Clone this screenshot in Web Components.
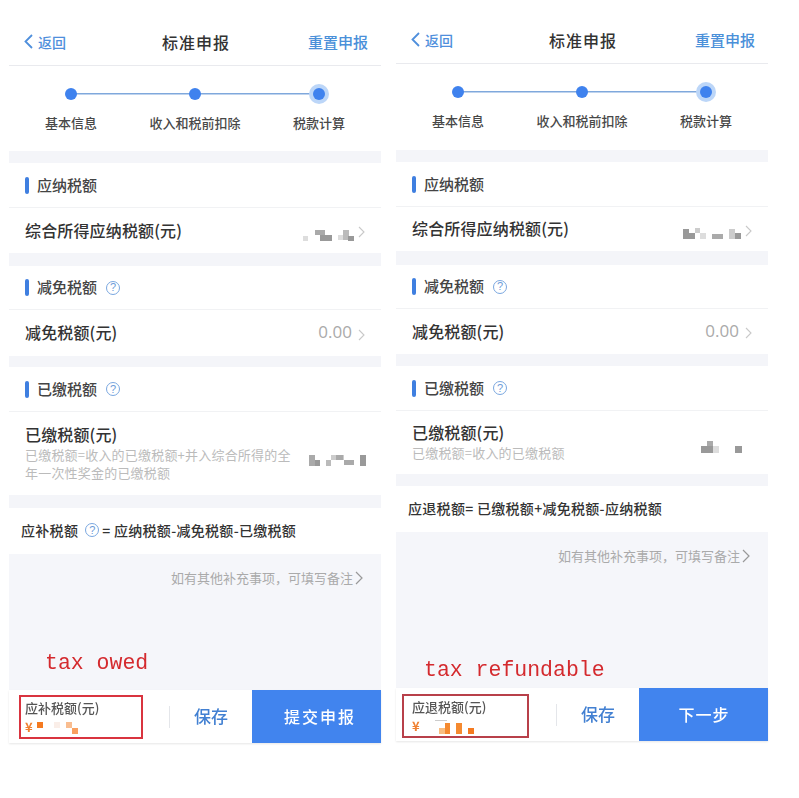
<!DOCTYPE html>
<html lang="zh-CN">
<head>
<meta charset="utf-8">
<title>标准申报</title>
<style>
  html, body { margin: 0; padding: 0; background: #fff; }
  body {
    width: 799px;
    height: 798px;
    overflow: hidden;
    display: flex;
    align-items: flex-start;
    padding-left: 9px;
    box-sizing: border-box;
    gap: 15px;
    font-family: "Noto Sans CJK SC", "Noto Sans", sans-serif;
    color: #333;
  }
  .green-strip { margin-left: 22px; width: 9px; height: 781px; background: #f4fcf2; }
  .note { font-family: "Liberation Mono", monospace; font-size: 21.5px; line-height: 24px; color: #d42a2e; white-space: pre; }
  .amount { color: #f08030; font-size: 13px; font-weight: 700; line-height: 14px; }
</style>
</head>
<body>

<tax-screen style="margin-top:20px">
  <app-nav></app-nav>
  <step-bar style="height:85px"></step-bar>
  <gray-band style="height:12px"></gray-band>
  <tax-section style="height:44px">应纳税额</tax-section>
  <tax-row style="height:46px" label="综合所得应纳税额(元)" chevron>
    <mosaic-blot size="51,11" rects="0,6,5,5,#ddd;12,0,10,5,#aaa;17,5,12,6,#999;35,5,5,5,#ddd;40,0,6,10,#bbb;45,6,6,5,#999" style="margin-top:9px"></mosaic-blot>
  </tax-row>
  <gray-band style="height:13px"></gray-band>
  <tax-section style="height:43px" help>减免税额</tax-section>
  <tax-row style="height:47px" label="减免税额(元)" chevron><span class="zero">0.00</span></tax-row>
  <gray-band style="height:11px"></gray-band>
  <tax-section style="height:44px" help>已缴税额</tax-section>
  <tax-row style="height:84px" label="已缴税额(元)" desc="已缴税额=收入的已缴税额+并入综合所得的全年一次性奖金的已缴税额">
    <mosaic-blot size="57,11" rects="0,0,6,11,#aaa;6,5,5,6,#999;17,5,5,6,#bbb;22,0,13,5,#ccc;27,0,7,5,#aaa;35,5,10,5,#aaa;51,0,6,11,#999" style="margin:13px -1px 0 0"></mosaic-blot>
  </tax-row>
  <gray-band style="height:13px"></gray-band>
  <tax-formula style="height:46px"><span>应补税额</span><help-mark style="margin:0 3px 0 7px"></help-mark><span>= 应纳税额-减免税额-已缴税额</span></tax-formula>
  <remark-area style="height:136px">
    <div class="note" style="margin:0 0 15px 36px">tax owed</div>
  </remark-area>
  <bottom-bar action="提交申报" pad="6" box="124" top="5" tone="#d9343f" spread="2" nudge="7">
    <span slot="label">应补税额(元)</span>
    <span class="amount">¥</span>
    <mosaic-blot size="41,12" rects="0,0,6,6,#f57a20;17,0,6,6,#faeee8;29,0,6,6,#f9bd90;35,6,6,6,#f9a060" style="margin:2px 0 0 4px"></mosaic-blot>
  </bottom-bar>
</tax-screen>

<tax-screen style="margin-top:18px">
  <app-nav></app-nav>
  <step-bar style="height:86px"></step-bar>
  <gray-band style="height:12px"></gray-band>
  <tax-section style="height:44px">应纳税额</tax-section>
  <tax-row style="height:45px" label="综合所得应纳税额(元)" chevron>
    <mosaic-blot size="58,11" rects="0,1,6,10,#999;6,5,6,6,#999;12,0,5,5,#ccc;17,5,6,6,#ddd;29,6,11,5,#aaa;46,1,6,10,#ccc;52,5,6,6,#999" style="margin-top:8px"></mosaic-blot>
  </tax-row>
  <gray-band style="height:14px"></gray-band>
  <tax-section style="height:43px" help>减免税额</tax-section>
  <tax-row style="height:46px" label="减免税额(元)" chevron><span class="zero">0.00</span></tax-row>
  <gray-band style="height:12px"></gray-band>
  <tax-section style="height:44px" help>已缴税额</tax-section>
  <tax-row style="height:64px" label="已缴税额(元)" desc="已缴税额=收入的已缴税额">
    <mosaic-blot size="41,12" rects="6,0,6,5,#aaa;0,5,12,7,#999;12,5,6,7,#ddd;34,5,7,7,#999" style="margin:8px 10px 0 0"></mosaic-blot>
  </tax-row>
  <gray-band style="height:12px"></gray-band>
  <tax-formula style="height:46px"><span>应退税额= 已缴税额+减免税额-应纳税额</span></tax-formula>
  <remark-area style="height:156px">
    <div class="note" style="margin:0 0 6px 28px">tax refundable</div>
  </remark-area>
  <bottom-bar action="下一步" pad="10" box="127" top="6" left="6" tone="#b8404a" spread="1" nudge="1">
    <span slot="label">应退税额(元)</span>
    <span class="amount">¥</span>
    <mosaic-blot size="39,14" rects="12,0,12,1,#ccc;16,8,6,6,#f9bd80;22,3,5,11,#f58a30;33,3,6,11,#f58a30;45,8,6,6,#f57a20" style="margin:1px 0 0 3px;width:60px"></mosaic-blot>
  </bottom-bar>
</tax-screen>

<div class="green-strip"></div>

<script>
class TaxScreen extends HTMLElement {
  constructor () {
    super()
    this.shadow = this.attachShadow({ mode: 'open' })
  }

  connectedCallback () {
    this.shadow.innerHTML = /*html*/`
      <style>
        :host {
          display: flex;
          flex-direction: column;
          flex: none;
          width: 372px;
          background: #fff;
          filter: blur(.5px);
        }
      </style>
      <slot></slot>
    `
  }
}

class AppNav extends HTMLElement {
  constructor () {
    super()
    this.shadow = this.attachShadow({ mode: 'open' })
  }

  connectedCallback () {
    this.shadow.innerHTML = /*html*/`
      <style>
        :host {
          display: grid;
          grid-template-columns: 1fr auto 1fr;
          align-items: center;
          flex: none;
          height: 46px;
          box-sizing: border-box;
          padding: 0 13px 2px 15px;
          border-bottom: 1px solid #e9eaee;
        }
        .back { display: flex; align-items: center; gap: 5px; color: #4f8fdc; font-size: 14px; font-weight: 500; }
        h1 { margin: 0; font-size: 16px; font-weight: 500; letter-spacing: 1px; color: #333; }
        .reset { justify-self: end; color: #4a90d9; font-size: 15px; font-weight: 500; }
        svg { display: block; }
      </style>
      <div class="back">
        <svg width="9" height="15" viewBox="0 0 9 15" fill="none" stroke="#4f8fdc" stroke-width="1.8"><path d="M8 1 1.5 7.5 8 14"/></svg>
        <span>返回</span>
      </div>
      <h1>标准申报</h1>
      <span class="reset">重置申报</span>
    `
  }
}

class StepBar extends HTMLElement {
  constructor () {
    super()
    this.shadow = this.attachShadow({ mode: 'open' })
  }

  connectedCallback () {
    this.shadow.innerHTML = /*html*/`
      <style>
        :host {
          display: block;
          flex: none;
          box-sizing: border-box;
          padding-top: 18px;
        }
        .track, .labels { display: grid; grid-template-columns: repeat(3, 1fr); justify-items: center; align-items: center; }
        .track { height: 20px; background: linear-gradient(#7fa8dc, #7fa8dc) center / 248px 1.5px no-repeat; }
        .dot { width: 12px; height: 12px; border-radius: 50%; background: #3f82ee; }
        .dot.on { box-shadow: 0 0 0 4px #bcd6f8; }
        .labels { margin-top: 10px; font-size: 13px; line-height: 18px; font-weight: 500; color: #484848; }
      </style>
      <div class="track"><i class="dot"></i><i class="dot"></i><i class="dot on"></i></div>
      <div class="labels"><span>基本信息</span><span>收入和税前扣除</span><span>税款计算</span></div>
    `
  }
}

class GrayBand extends HTMLElement {
  constructor () {
    super()
    this.attachShadow({ mode: 'open' }).innerHTML = '<style>:host { display: block; flex: none; background: #f4f5f9; }</style>'
  }
}

class HelpMark extends HTMLElement {
  constructor () {
    super()
    this.attachShadow({ mode: 'open' }).innerHTML = /*html*/`<style>
        :host {
          display: inline-flex;
          align-items: center;
          justify-content: center;
          flex: none;
          width: 14px;
          height: 14px;
          box-sizing: border-box;
          border: 1px solid #7aa7e0;
          border-radius: 50%;
          color: #6d9cd8;
          letter-spacing: 0;
          font: 400 11px/1 "Liberation Sans", sans-serif;
          white-space: normal;
        }
      </style><span>?</span>`
  }
}

class TaxSection extends HTMLElement {
  constructor () {
    super()
    this.shadow = this.attachShadow({ mode: 'open' })
  }

  connectedCallback () {
    this.shadow.innerHTML = /*html*/`
      <style>
        :host {
          display: flex;
          align-items: center;
          flex: none;
          box-sizing: border-box;
          padding-left: 16px;
          font-size: 15px;
          font-weight: 500;
          color: #444;
        }
        .bar { width: 4px; height: 17px; margin-right: 8px; border-radius: 2px; background: #3f7fe0; }
        .title { margin-bottom: 2px; }
        help-mark { margin-left: 9px; }
      </style>
      <i class="bar"></i><span class="title"><slot></slot></span>${this.hasAttribute('help') ? '<help-mark></help-mark>' : ''}
    `
  }
}

class TaxRow extends HTMLElement {
  constructor () {
    super()
    this.shadow = this.attachShadow({ mode: 'open' })
  }

  connectedCallback () {
    const desc = this.getAttribute('desc')
    this.shadow.innerHTML = /*html*/`
      <style>
        :host {
          display: flex;
          align-items: center;
          justify-content: space-between;
          flex: none;
          box-sizing: border-box;
          padding: 0 16px;
          border-top: 1px solid #f1f2f4;
        }
        .text { margin-bottom: 2px; }
        .label { font-size: 16px; line-height: 20px; font-weight: 500; letter-spacing: .15px; color: #333; }
        .desc { width: 266px; margin-top: 2px; overflow: hidden; font-size: 13px; line-height: 18px; letter-spacing: .2px; color: #bbb; }
        .value { display: flex; align-items: center; color: #aaa; font: 400 17px/20px "Open Sans", sans-serif; }
        ::slotted(.zero) { margin: 0 2px 2px 0; }
        svg { display: block; margin: 3px 0 0 4px; }
      </style>
      <div class="text">
        <div class="label">${this.getAttribute('label')}</div>
        ${desc ? `<div class="desc">${desc}</div>` : ''}
      </div>
      <div class="value">
        <slot></slot>
        ${this.hasAttribute('chevron') ? '<svg width="7" height="12" viewBox="0 0 7 12" fill="none" stroke="#c9c9c9" stroke-width="1.1"><path d="M1 1l5 5-5 5"/></svg>' : ''}
      </div>
    `
  }
}

class TaxFormula extends HTMLElement {
  constructor () {
    super()
    this.attachShadow({ mode: 'open' }).innerHTML = /*html*/`
      <style>
        :host {
          display: flex;
          align-items: center;
          flex: none;
          box-sizing: border-box;
          padding: 0 0 2px 12px;
          font-size: 14px;
          font-weight: 500;
          letter-spacing: .3px;
          color: #333;
          white-space: pre;
        }
      </style>
      <slot></slot>
    `
  }
}

class RemarkArea extends HTMLElement {
  constructor () {
    super()
    this.attachShadow({ mode: 'open' }).innerHTML = /*html*/`
      <style>
        :host {
          display: flex;
          flex-direction: column;
          justify-content: space-between;
          flex: none;
          background: #f5f6fa;
        }
        .hint {
          display: flex;
          align-items: center;
          justify-content: flex-end;
          gap: 2px;
          padding: 15px 18px 0 0;
          font-size: 13px;
          line-height: 18px;
          color: #aaa;
        }
        svg { display: block; }
      </style>
      <div class="hint">
        <span>如有其他补充事项，可填写备注</span>
        <svg width="8" height="14" viewBox="0 0 8 14" fill="none" stroke="#999" stroke-width="1.2"><path d="M1 1l6 6-6 6"/></svg>
      </div>
      <slot></slot>
    `
  }
}

class MosaicBlot extends HTMLElement {
  constructor () {
    super()
    this.shadow = this.attachShadow({ mode: 'open' })
  }

  connectedCallback () {
    const [w, h] = this.getAttribute('size').split(',')
    const rects = this.getAttribute('rects').split(';').map(item => {
      const [x, y, rw, rh, fill] = item.split(',')
      return `<rect x="${x}" y="${y}" width="${rw}" height="${rh}" fill="${fill}"/>`
    }).join('')
    this.shadow.innerHTML = /*html*/`
      <style>
        :host { display: block; flex: none; }
        svg { display: block; overflow: visible; filter: blur(.7px); }
      </style>
      <svg width="${w}" height="${h}">${rects}</svg>
    `
  }
}

class BottomBar extends HTMLElement {
  constructor () {
    super()
    this.shadow = this.attachShadow({ mode: 'open' })
  }

  connectedCallback () {
    const attr = name => this.getAttribute(name)
    this.shadow.innerHTML = /*html*/`
      <style>
        :host {
          display: flex;
          flex: none;
          height: 53px;
          background: #fff;
          box-shadow: 0 1px 2px rgba(0, 0, 0, .1);
        }
        .summary { flex: none; width: 160px; box-sizing: border-box; padding: ${attr('top')}px 0 0 ${attr('left') || 10}px; }
        .box {
          width: ${attr('box')}px;
          height: 44px;
          box-sizing: border-box;
          padding: 2px 0 0 ${attr('pad') - 2}px;
          border: 2px solid ${attr('tone')};
        }
        .label { font-size: 13px; line-height: 18px; font-weight: 500; color: #555; }
        .amount { display: flex; align-items: flex-start; margin-top: 3px; }
        .save { flex: 1; display: flex; align-items: center; }
        .save i { width: 1px; height: 22px; background: #e4e6ea; }
        .save span { flex: 1; padding-bottom: 2px; text-align: center; color: #4280d2; font-size: 17px; font-weight: 500; }
        .action {
          flex: none;
          display: flex;
          align-items: center;
          justify-content: center;
          width: 129px;
          box-sizing: border-box;
          padding: 0 0 2px ${attr('nudge')}px;
          background: #4184ee;
          color: #fff;
          font-size: 16px;
          font-weight: 500;
          letter-spacing: ${attr('spread')}px;
        }
      </style>
      <div class="summary">
        <div class="box">
          <div class="label"><slot name="label"></slot></div>
          <div class="amount"><slot></slot></div>
        </div>
      </div>
      <div class="save"><i></i><span>保存</span></div>
      <div class="action">${attr('action')}</div>
    `
  }
}

customElements.define('tax-screen', TaxScreen)
customElements.define('app-nav', AppNav)
customElements.define('step-bar', StepBar)
customElements.define('gray-band', GrayBand)
customElements.define('help-mark', HelpMark)
customElements.define('tax-section', TaxSection)
customElements.define('tax-row', TaxRow)
customElements.define('tax-formula', TaxFormula)
customElements.define('remark-area', RemarkArea)
customElements.define('mosaic-blot', MosaicBlot)
customElements.define('bottom-bar', BottomBar)
</script>
</body>
</html>
